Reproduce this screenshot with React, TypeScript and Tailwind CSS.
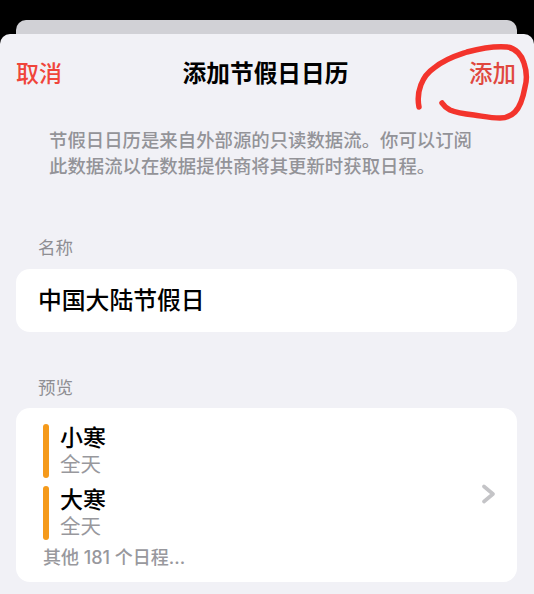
const FONT = 'font-["Inter","Noto_Sans_CJK_SC",sans-serif]'

function EventRow({ title }: { title: string }) {
  return (
    <div className="flex h-[54px] gap-[11px]">
      <div className="w-[6px] rounded-full bg-[#f59a1b]" />
      <div className="flex flex-col">
        <span className="text-[23px] leading-[28px] font-medium text-black">{title}</span>
        <span className="text-[20.5px] leading-[25px] text-[#98989d]">全天</span>
      </div>
    </div>
  )
}

export default function App() {
  return (
    <div className={`h-[594px] w-[534px] overflow-hidden bg-black ${FONT}`}>
      <div className="mt-[20px] mr-[17px] ml-[16px] h-[30px] rounded-t-[10px] bg-[#d1d1d6]" />
      <div className="relative -mt-[16px] h-[560px] rounded-t-[10px] bg-[#f1f1f6]">
        <div className="flex items-center justify-between pt-[24px] pr-[16px] pl-[16px]">
          <span className="text-[23px] leading-[32px] font-medium text-[#f0453a]">取消</span>
          <span className="text-[23.7px] leading-[32px] font-semibold text-black">添加节假日日历</span>
          <span className="pr-[2px] text-[23.5px] leading-[32px] font-medium text-[#e0483f]">添加</span>
        </div>

        <p className="mt-[37px] pl-[49px] text-[18.4px] leading-[26px] font-medium whitespace-nowrap text-[#939398]">
          节假日日历是来自外部源的只读数据流。你可以订阅
          <br />
          此数据流以在数据提供商将其更新时获取日程。
        </p>

        <p className="mt-[57px] pl-[38px] text-[17.5px] leading-[24px] text-[#8e8e93]">名称</p>
        <div className="mt-[9px] mr-[17px] ml-[16px] flex h-[63px] items-center rounded-[14px] bg-white px-[22px] text-[23.8px] font-medium text-black">
          中国大陆节假日
        </div>

        <p className="mt-[44px] pl-[38px] text-[17.5px] leading-[24px] text-[#8e8e93]">预览</p>
        <div className="mt-[8px] mr-[17px] ml-[16px] flex h-[174px] items-center justify-between rounded-[14px] bg-white pr-[21px] pl-[27px]">
          <div className="flex flex-col gap-[8px] pt-[4px]">
            <EventRow title="小寒" />
            <EventRow title="大寒" />
            <span className="-mt-[2px] text-[18px] leading-[24px] font-medium whitespace-nowrap text-[#98989d]">其他 181 个日程...</span>
          </div>
          <svg width="14" height="20" viewBox="0 0 14 20" fill="none" className="-mt-[3px]">
            <path d="M2 2.5 L11 10 L2 17.5" stroke="#c4c4c7" strokeWidth="3.6" strokeLinecap="round" strokeLinejoin="round" />
          </svg>
        </div>

        {/* red marker circle drawn over the add button */}
        <svg width="534" height="140" viewBox="0 0 534 140" fill="none" className="pointer-events-none absolute top-[-34px] left-0">
          <path
            d="M419 107 C416 92 422 76 434 68 C446 58 458 55 467 52 C482 48 496 46 507 47 C516 48 522 56 524 63 C527 72 527 80 525 87 C523 98 520 107 515 112 C510 117 505 118 500 118 C490 118 482 116 474 115 C465 114 457 113 450 110 C446 108 444 106 442 103"
            stroke="#f3342c"
            strokeWidth="5.5"
            strokeLinecap="round"
            strokeLinejoin="round"
          />
        </svg>
      </div>
    </div>
  )
}
